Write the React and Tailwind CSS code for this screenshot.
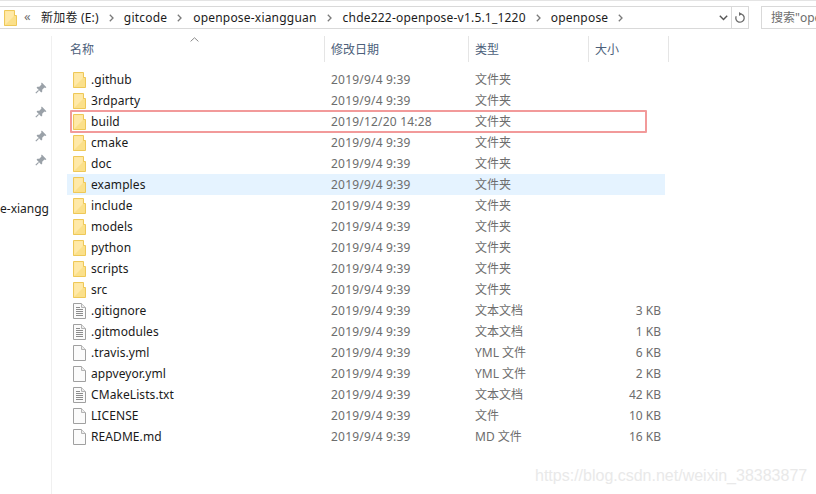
import React from "react";

const font = { fontFamily: '"Noto Sans","Noto Sans CJK SC",sans-serif' };

const rows = [
  [".github", "2019/9/4 9:39", "文件夹", "", "folder"],
  ["3rdparty", "2019/9/4 9:39", "文件夹", "", "folder"],
  ["build", "2019/12/20 14:28", "文件夹", "", "folder"],
  ["cmake", "2019/9/4 9:39", "文件夹", "", "folder"],
  ["doc", "2019/9/4 9:39", "文件夹", "", "folder"],
  ["examples", "2019/9/4 9:39", "文件夹", "", "folder", true],
  ["include", "2019/9/4 9:39", "文件夹", "", "folder"],
  ["models", "2019/9/4 9:39", "文件夹", "", "folder"],
  ["python", "2019/9/4 9:39", "文件夹", "", "folder"],
  ["scripts", "2019/9/4 9:39", "文件夹", "", "folder"],
  ["src", "2019/9/4 9:39", "文件夹", "", "folder"],
  [".gitignore", "2019/9/4 9:39", "文本文档", "3 KB", "text"],
  [".gitmodules", "2019/9/4 9:39", "文本文档", "1 KB", "text"],
  [".travis.yml", "2019/9/4 9:39", "YML 文件", "6 KB", "file"],
  ["appveyor.yml", "2019/9/4 9:39", "YML 文件", "2 KB", "file"],
  ["CMakeLists.txt", "2019/9/4 9:39", "文本文档", "42 KB", "text"],
  ["LICENSE", "2019/9/4 9:39", "文件", "10 KB", "file"],
  ["README.md", "2019/9/4 9:39", "MD 文件", "16 KB", "file"],
];

function Folder({ className = "" }) {
  return (
    <svg width="13" height="16" viewBox="0 0 13 16" className={className}>
      <path d="M0.5 0.5H10.5V15.5H0.5Z" fill="#ffe699" stroke="#eec858" />
      <path d="M1.5 1.5H9.5V14.5H1.5Z" fill="#ffe9a8" />
      <path d="M10.5 5.5H12.5V15.5H0.5" fill="#fbe08a" stroke="#eec858" />
    </svg>
  );
}

function Doc({ lines }) {
  return (
    <svg width="13" height="16" viewBox="0 0 13 16">
      <path d="M0.5 0.5H8.5L12.5 4.5V15.5H0.5Z" fill="#fbfbfb" stroke="#a0a0a0" />
      <path d="M8.5 0.5V4.5H12.5" fill="#ececec" stroke="#b4b4b4" />
      {lines && (
        <path d="M3 4.5H7M3 6.5H10M3 8.5H10M3 10.5H10M3 12.5H10" stroke="#8c8c8c" fill="none" />
      )}
    </svg>
  );
}

function Chevron() {
  return (
    <svg width="5" height="8" viewBox="0 0 5 8" className="shrink-0">
      <path d="M0.8 0.8L4 4L0.8 7.2" fill="none" stroke="#7a7a7a" strokeWidth="1.3" />
    </svg>
  );
}

function Pin() {
  return (
    <svg width="12" height="12" viewBox="0 0 12 12">
      <path d="M6.8 0.6L11.4 5.2L10.3 5.9L9.4 5.5L7.2 7.7L7.2 9.7L6.2 10.4L1.6 5.8L2.3 4.8L4.3 4.8L6.5 2.6L6.1 1.7Z" fill="#9aa1a8" />
      <path d="M3.6 8.4L0.8 11.2" stroke="#9aa1a8" strokeWidth="1.2" />
    </svg>
  );
}

export default function App() {
  return (
    <div style={font} className="relative w-[816px] h-[494px] overflow-hidden bg-white text-[12px] leading-[21px] text-[#1c1c1c]">
      <div className="h-[1px] bg-[#e4e4e4]" />
      {/* Address row */}
      <div className="h-[35px] pt-[5px] flex items-start">
        <div className="w-[749px] h-[23px] flex items-center border-y border-r border-[#d9d9d9] pl-[4px] tracking-[0.2px]">
          <Folder />
          <span className="ml-[7px] w-[9px] text-[#6f6f6f] text-[13px] leading-none pb-[2px]">«</span>
          <span className="ml-[8px]">新加卷 (E:)</span>
          <span className="ml-[10px]"><Chevron /></span>
          <span className="ml-[10px]">gitcode</span>
          <span className="ml-[10px]"><Chevron /></span>
          <span className="ml-[11px]">openpose-xiangguan</span>
          <span className="ml-[10px]"><Chevron /></span>
          <span className="ml-[11px]">chde222-openpose-v1.5.1_1220</span>
          <span className="ml-[10px]"><Chevron /></span>
          <span className="ml-[10px]">openpose</span>
          <span className="ml-[10px]"><Chevron /></span>
          <div className="ml-auto flex items-center h-full">
            <svg width="9" height="6" viewBox="0 0 9 6" className="mr-[3px]">
              <path d="M0.8 0.8L4.5 4.6L8.2 0.8" fill="none" stroke="#555" strokeWidth="1.4" />
            </svg>
            <div className="h-full w-[1px] bg-[#d9d9d9]" />
            <svg width="12" height="12" viewBox="0 0 12 12" className="mx-[2px]">
              <path d="M6 1.8A4.2 4.2 0 1 1 2.2 4.2" fill="none" stroke="#6c6c6c" strokeWidth="1.3" />
              <path d="M5 0L8 2L5 4Z" fill="#6c6c6c" />
            </svg>
          </div>
        </div>
        <div className="ml-[12px] flex-1 h-[23px] border-y border-l border-[#d9d9d9] pl-[9px] flex items-center text-[#6d6d6d] whitespace-nowrap overflow-hidden">
          搜索"openpose"
        </div>
      </div>

      <div className="flex h-[458px]">
        {/* Sidebar */}
        <div className="w-[52px] shrink-0 border-r border-[#f0f0f0] flex flex-col items-end overflow-hidden">
          <div className="flex flex-col gap-[12px] pr-[4px] pt-[46px]">
            <Pin /><Pin /><Pin /><Pin />
          </div>
          <div className="mt-[32px] pr-[2px] whitespace-nowrap text-[#1c1c1c]">openpose-xiangg</div>
        </div>

        {/* Main list */}
        <div className="flex-1 relative">
          {/* Header */}
          <div className="relative flex h-[26px] mb-[7px] text-[#4c607a]">
            <svg width="9" height="5" viewBox="0 0 9 5" className="absolute left-[138px] top-[1px]">
              <path d="M0.6 4.4L4.5 0.8L8.4 4.4" fill="none" stroke="#8a8a8a" />
            </svg>
            <div className="w-[273px] pl-[18px] border-r border-[#e5e5e5] leading-[27px]">名称</div>
            <div className="w-[144px] pl-[6px] border-r border-[#e5e5e5] leading-[27px]">修改日期</div>
            <div className="w-[120px] pl-[6px] border-r border-[#e5e5e5] leading-[27px]">类型</div>
            <div className="w-[80px] pl-[6px] border-r border-[#e5e5e5] leading-[27px]">大小</div>
          </div>

          {/* Rows */}
          <div className="ml-[15px] w-[598px]">
            {rows.map((r) => (
              <div key={r[0]} className={`h-[21px] flex items-center ${r[5] ? "bg-[#e5f3ff]" : ""}`}>
                <div className="w-[24px] pl-[6px] flex items-center shrink-0">
                  {r[4] === "folder" ? <Folder /> : <Doc lines={r[4] === "text"} />}
                </div>
                <div className="w-[240px] shrink-0 text-[#1a1a1a] tracking-[0.08px]">{r[0]}</div>
                <div className="w-[144px] shrink-0 text-[#6d6d6d] tracking-[0.2px]">{r[1]}</div>
                <div className="w-[100px] shrink-0 text-[#6d6d6d]">{r[2]}</div>
                <div className="w-[86px] shrink-0 text-right text-[#6d6d6d]">{r[3]}</div>
              </div>
            ))}
          </div>
        </div>
      </div>

      {/* Annotation box */}
      <div className="absolute left-[70px] top-[110px] w-[577px] h-[23px] border-2 border-[#f29a9a] rounded-[1px]" />

      {/* Watermark */}
      <div className="absolute left-[535px] top-[464px] text-[16px] leading-[24px] text-[#e9e9e9] whitespace-nowrap" style={{ fontFamily: '"Liberation Sans",sans-serif' }}>
        https://blog.csdn.net/weixin_38383877
      </div>
    </div>
  );
}
